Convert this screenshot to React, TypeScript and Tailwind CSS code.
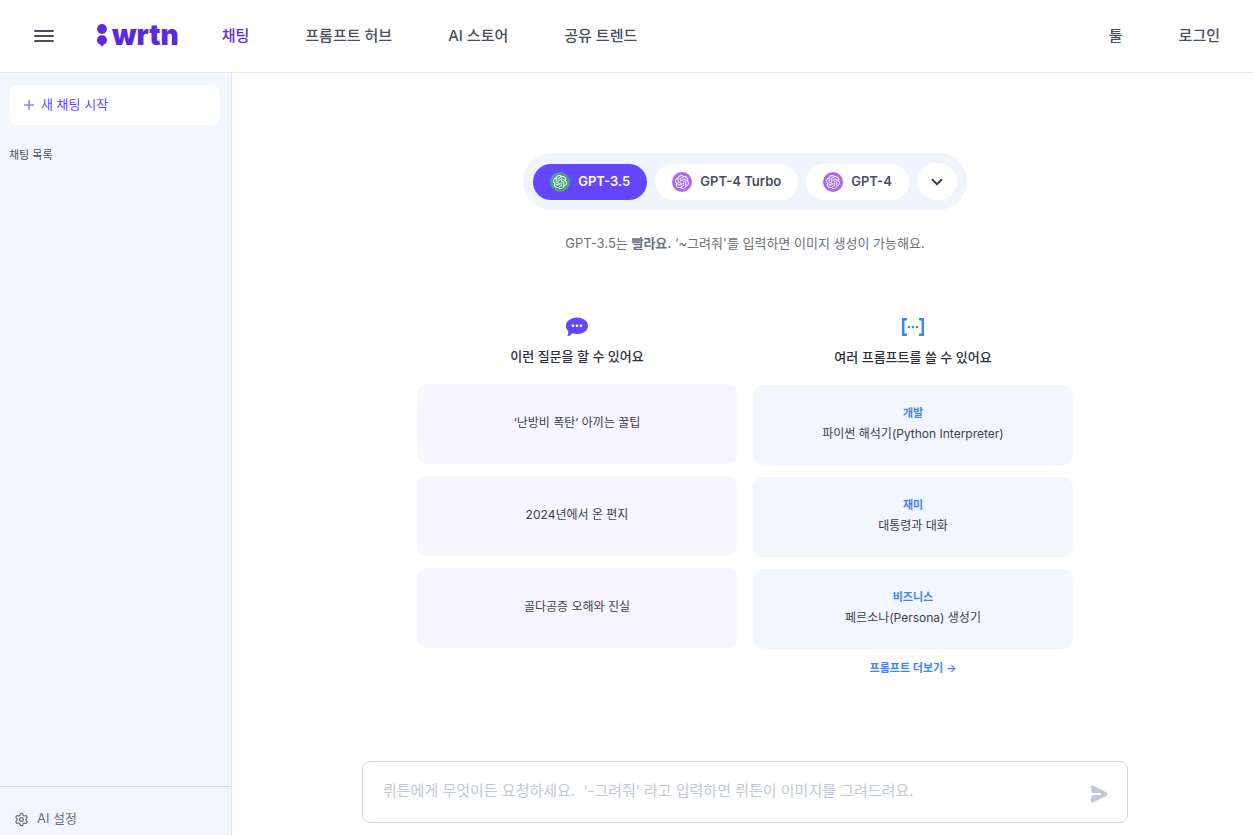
import { useState } from 'react';
import { ChevronDown, Plus, Settings } from 'lucide-react';
import { SiOpenai } from 'react-icons/si';

const NAV = [
  { label: '채팅', active: true },
  { label: '프롬프트 허브', active: false },
  { label: 'AI 스토어', active: false },
  { label: '공유 트렌드', active: false },
];

const MODELS = ['GPT-3.5', 'GPT-4 Turbo', 'GPT-4'];

const QUESTIONS = ['‘난방비 폭탄’ 아끼는 꿀팁', '2024년에서 온 편지', '골다공증 오해와 진실'];

const PROMPTS = [
  { category: '개발', title: '파이썬 해석기(Python Interpreter)' },
  { category: '재미', title: '대통령과 대화' },
  { category: '비즈니스', title: '페르소나(Persona) 생성기' },
];

function Logo() {
  return (
    <a href="#" aria-label="wrtn" className="flex items-center gap-1 pb-0.5 text-[#5b2bd9]">
      <svg className="w-3 h-6" viewBox="0 0 12 24" fill="currentColor">
        <circle cx="6" cy="6" r="4.9" />
        <path d="M6 12.2a4.9 4.9 0 0 1 2 9.4L6 23.4 4 21.6a4.9 4.9 0 0 1 2-9.4z" />
      </svg>
      <span className="text-[28px] leading-6 font-black">wrtn</span>
    </a>
  );
}

function Header() {
  return (
    <header className="flex items-center h-[73px] pl-8 pr-[33px] border-b border-[#e1e5f7] text-[15px] font-medium text-[#4a4f60]">
      <button type="button" aria-label="메뉴" className="cursor-pointer">
        <svg className="w-6 h-6" viewBox="0 0 24 24" fill="none" stroke="currentColor">
          <path strokeWidth={2} strokeLinecap="round" d="M3 7h18M3 12h18M3 17h18" />
        </svg>
      </button>
      <div className="ml-10">
        <Logo />
      </div>
      <nav className="flex gap-14 ml-[43px]">
        {NAV.map((item) => (
          <a key={item.label} href="#" className={item.active ? 'text-[#5b2bd9]' : ''}>
            {item.label}
          </a>
        ))}
      </nav>
      <div className="flex gap-14 ml-auto">
        <a href="#">툴</a>
        <a href="#">로그인</a>
      </div>
    </header>
  );
}

function Sidebar() {
  return (
    <aside className="flex flex-col justify-between w-[232px] shrink-0 bg-[#f1f6ff] border-r border-[#e1e5f2]">
      <div className="pt-3 pl-[9px] pr-[11px]">
        <button
          type="button"
          className="flex items-center gap-1 w-full h-10 px-3 rounded-lg bg-white text-[13px] text-[#6446ff] cursor-pointer"
        >
          <Plus size={16} strokeWidth={1.5} />새 채팅 시작
        </button>
        <h2 className="mt-5 text-[11px] leading-5 text-[#4a4f60]">채팅 목록</h2>
      </div>
      <div className="border-t border-[#cfd6f0]">
        <button
          type="button"
          className="flex items-center gap-2 h-12 pl-3.5 pt-4 text-[13px] text-[#6b7080] cursor-pointer"
        >
          <Settings size={15} strokeWidth={2} />
          AI 설정
        </button>
      </div>
    </aside>
  );
}

function ModelPicker() {
  const [model, setModel] = useState('GPT-3.5');

  return (
    <div className="flex items-center gap-2 h-[57px] px-2.5 rounded-full bg-[#f0f4ff]">
      {MODELS.map((name) => (
        <button
          key={name}
          type="button"
          aria-pressed={name === model}
          onClick={() => setModel(name)}
          className={`flex items-center gap-2 h-9 px-[17px] rounded-full text-[13px] font-semibold cursor-pointer ${
            name === model ? 'bg-[#6446ff] text-white' : 'bg-white text-[#4a4f60]'
          }`}
        >
          <span
            className={`flex items-center justify-center w-5 h-5 rounded-full text-white ${
              name === 'GPT-3.5' ? 'bg-[#4aa181]' : 'bg-[#a969f8]'
            }`}
          >
            <SiOpenai size={14} />
          </span>
          {name}
        </button>
      ))}
      <button
        type="button"
        aria-label="모델 더보기"
        className="flex items-center justify-center w-10 h-[37px] rounded-full bg-white text-[#3b3f4e] cursor-pointer"
      >
        <ChevronDown size={18} strokeWidth={2.5} />
      </button>
    </div>
  );
}

function QuestionColumn() {
  return (
    <section className="flex flex-col items-center flex-1">
      <svg className="w-6 h-6" viewBox="0 0 24 24" fill="#6446ff">
        <path d="M12 3.4c6.2 0 11 3.6 11 8.3s-4.8 8.3-11 8.3c-1.7 0-3.2-.2-4.5-.7-1 .9-2.6 2.6-5.1 2.9.7-1.2 1-2.9.8-5.1C1.8 15.6 1 13.7 1 11.7 1 7 5.8 3.4 12 3.4z" />
        <g fill="#fff">
          <circle cx="8" cy="11.7" r="1.3" />
          <circle cx="12" cy="11.7" r="1.3" />
          <circle cx="16" cy="11.7" r="1.3" />
        </g>
      </svg>
      <h2 className="mt-2 text-[13px] leading-5 font-medium text-[#2c303b]">이런 질문을 할 수 있어요</h2>
      <ul className="flex flex-col gap-3 w-full mt-[18px]">
        {QUESTIONS.map((question) => (
          <li key={question}>
            <button
              type="button"
              className="w-full h-20 pb-0.5 rounded-[10px] bg-[#f7f5ff] text-xs text-[#3b3f4e] cursor-pointer"
            >
              {question}
            </button>
          </li>
        ))}
      </ul>
    </section>
  );
}

function PromptColumn() {
  return (
    <section className="flex flex-col items-center flex-1 pt-px">
      <svg className="w-6 h-6" viewBox="0 0 24 24" fill="none" stroke="#3c83f6">
        <path strokeWidth={2.5} d="M6 4.2H2.2v15.6H6M18 4.2h3.8v15.6H18" />
        <path strokeWidth={2.6} strokeLinecap="round" d="M8 12h.01M12 12h.01M16 12h.01" />
      </svg>
      <h2 className="mt-2 text-[13px] leading-5 font-medium text-[#2c303b]">여러 프롬프트를 쓸 수 있어요</h2>
      <ul className="flex flex-col gap-3 w-full mt-[18px]">
        {PROMPTS.map((prompt) => (
          <li key={prompt.category}>
            <button
              type="button"
              className="flex flex-col items-center justify-center w-full h-20 pb-0.5 rounded-[10px] bg-[#f1f6ff] text-xs text-[#3b3f4e] cursor-pointer"
            >
              <span className="text-[11px] leading-5 font-bold text-[#4282ff]">{prompt.category}</span>
              <span className="leading-[22px]">{prompt.title}</span>
            </button>
          </li>
        ))}
      </ul>
      <a href="#" className="mt-[9px] text-[11px] leading-5 font-semibold text-[#4282ff]">
        프롬프트 더보기 →
      </a>
    </section>
  );
}

function ChatInput() {
  return (
    <form
      onSubmit={(e) => e.preventDefault()}
      className="flex items-center w-full max-w-[766px] h-[62px] pl-5 pr-4 mt-auto mb-3 rounded-lg border border-[#cfd6ea] bg-white"
    >
      <textarea
        rows={1}
        aria-label="메시지"
        placeholder="뤼튼에게 무엇이든 요청하세요.  ‘-그려줘’ 라고 입력하면 뤼튼이 이미지를 그려드려요."
        className="flex-1 h-6 mb-0.5 text-[15px] leading-6 text-[#3b3f4e] placeholder:text-[#c2c7da] resize-none outline-none overflow-hidden"
      />
      <button type="submit" aria-label="보내기" className="pt-1 text-[#c2c7da] cursor-pointer">
        <svg className="w-6 h-6" viewBox="0 0 24 24" fill="currentColor">
          <path d="M3.7 6.2c-.6-1.8.9-3.3 2.6-2.5l13.1 6.5c1.5.8 1.5 2.8 0 3.6L6.3 20.3c-1.700.8-3.2-.7-2.6-2.5L5.2 13H13a1 1 0 0 0 0-2H5.2z" />
        </svg>
      </button>
    </form>
  );
}

export default function App() {
  return (
    <div className="flex flex-col min-h-screen bg-white font-['Inter','Noto_Sans_CJK_KR',sans-serif]">
      <Header />
      <div className="flex flex-1">
        <Sidebar />
        <main className="flex flex-col items-center flex-1 pt-20 pl-[5px]">
          <ModelPicker />
          <p className="mt-[23px] text-[13px] leading-5 text-[#6b7080]">
            GPT-3.5는 <strong className="font-semibold">빨라요.</strong> ‘~그려줘'를 입력하면 이미지 생성이
            가능해요.
          </p>
          <div className="flex gap-4 w-full max-w-[656px] mt-[61px] mb-8">
            <QuestionColumn />
            <PromptColumn />
          </div>
          <ChatInput />
        </main>
      </div>
    </div>
  );
}
